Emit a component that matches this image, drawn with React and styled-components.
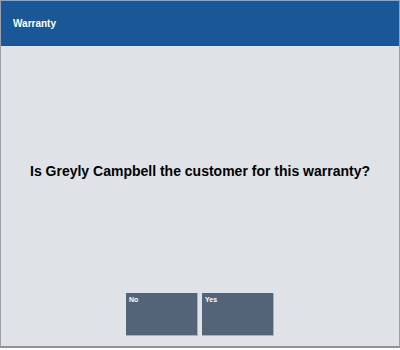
import React from "react";
import styled, { createGlobalStyle } from "styled-components";

const GlobalStyle = createGlobalStyle`
  html, body {
    margin: 0;
    padding: 0;
    background: #ffffff;
  }
  body {
    font-family: "Liberation Sans", Arial, sans-serif;
  }
`;

const Frame = styled.div`
  width: 400px;
  height: 348px;
  box-sizing: border-box;
  border: 1px solid #9aa0a8;
  border-bottom: 2px solid #8c939b;
  background: #dfe2e6;
  display: flex;
  flex-direction: column;
`;

const Header = styled.div`
  height: 45px;
  flex-shrink: 0;
  background: #1a5796;
  color: #ffffff;
  font-size: 10px;
  font-weight: 700;
  padding: 17px 0 0 12px;
  box-sizing: border-box;
`;

const Body = styled.div`
  flex: 1;
  display: flex;
  flex-direction: column;
  align-items: center;
`;

const Question = styled.div`
  margin-top: 117px;
  font-size: 14px;
  font-weight: 700;
  color: #000000;
`;

const Actions = styled.div`
  margin-top: auto;
  margin-bottom: 10px;
  display: flex;
  gap: 4px;
`;

const ActionButton = styled.button`
  width: 72px;
  height: 43px;
  background: #536478;
  border: none;
  border-right: 1px solid #a8b0ba;
  border-bottom: 1px solid #a8b0ba;
  color: #ffffff;
  font-family: "Liberation Sans", Arial, sans-serif;
  font-size: 7px;
  font-weight: 700;
  text-align: left;
  padding: 3px 0 0 3px;
  display: flex;
  align-items: flex-start;
  box-sizing: border-box;
`;

export default function App() {
  return (
    <>
      <GlobalStyle />
      <Frame>
        <Header>Warranty</Header>
        <Body>
          <Question>Is Greyly Campbell the customer for this warranty?</Question>
          <Actions>
            <ActionButton>No</ActionButton>
            <ActionButton>Yes</ActionButton>
          </Actions>
        </Body>
      </Frame>
    </>
  );
}
